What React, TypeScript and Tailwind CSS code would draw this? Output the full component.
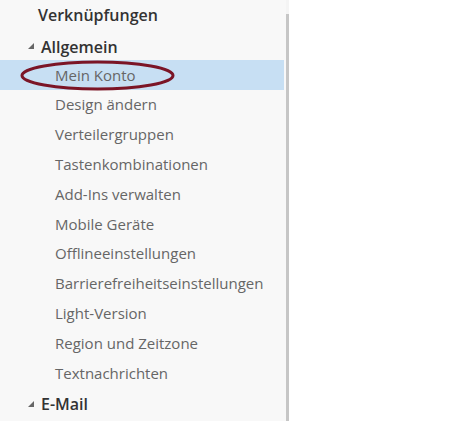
import React from 'react';

const items = [
  'Mein Konto',
  'Design ändern',
  'Verteilergruppen',
  'Tastenkombinationen',
  'Add-Ins verwalten',
  'Mobile Geräte',
  'Offlineeinstellungen',
  'Barrierefreiheitseinstellungen',
  'Light-Version',
  'Region und Zeitzone',
  'Textnachrichten',
];

function Caret() {
  return (
    <svg width="8" height="8" viewBox="0 0 8 8" className="mr-[6px] mt-[2px]">
      <polygon points="7,1 7,7 1,7" fill="#666666" />
    </svg>
  );
}

function Section({ label }: { label: string }) {
  return (
    <div className="flex h-[30px] items-center pl-[27px] text-[16px] font-semibold text-[#333333]">
      <Caret />
      <span className="pt-[3px]">{label}</span>
    </div>
  );
}

export default function App() {
  return (
    <div
      className="flex h-[421px] w-[459px] bg-white"
      style={{ fontFamily: '"Open Sans", "Noto Sans", sans-serif' }}
    >
      {/* NAV PANEL */}
      <div className="relative w-[286px] bg-[#f8f8f8]">
        <div className="flex h-[30px] items-center pl-[38px] text-[16px] font-semibold text-[#333333]">
          Verknüpfungen
        </div>
        <Section label="Allgemein" />
        {items.map((item, i) => (
          <div
            key={item}
            className={
              i === 0
                ? 'flex h-[29.8px] w-[284px] items-center bg-[#c7dff3] pl-[55px] text-[15px] text-[#666666]'
                : 'flex h-[29.8px] items-center pl-[55px] text-[15px] text-[#666666]'
            }
          >
            {item}
          </div>
        ))}
        <Section label="E-Mail" />

        {/* hand-drawn highlight */}
        <svg className="absolute left-0 top-0" width="200" height="100">
          <ellipse cx="97.5" cy="75.5" rx="75.5" ry="13.5" fill="none" stroke="#7b1526" strokeWidth="3" />
        </svg>
      </div>

      {/* SCROLLBAR */}
      <div className="flex w-[3px] flex-col">
        <div className="h-[14px] bg-[#f4f4f4]" />
        <div className="flex-1 bg-[#c6c6c6]" />
      </div>

      <div className="flex-1 bg-white" />
    </div>
  );
}
